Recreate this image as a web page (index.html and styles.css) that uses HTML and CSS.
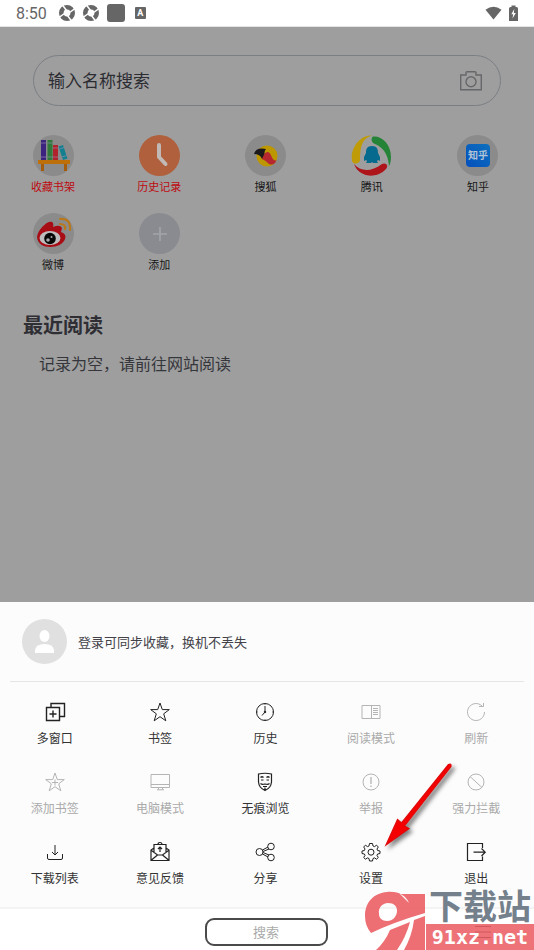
FILE: index.html
```html
<!DOCTYPE html>
<html lang="zh-CN">
<head>
    <meta charset="UTF-8">
    <meta name="viewport" content="width=device-width, initial-scale=1.0">
    <title>首页</title>
    <link rel="stylesheet" href="styles.css">
</head>
<body>

<div class="screen">
    <header class="status-bar">
        <span class="time">8:50</span>
        <div class="status-icons">
            <svg class="aperture" viewBox="0 0 16 16"><circle cx="8" cy="8" r="5.7" fill="none" stroke="#666" stroke-width="4.6"/><path d="M3.500 0 7.500 5.500M16 3.500 10.500 7.500M12.500 16 8.500 10.500M0 12.500 5.500 8.500" stroke="#fff" stroke-width="1.500"/></svg>
            <svg class="aperture" viewBox="0 0 16 16"><circle cx="8" cy="8" r="5.7" fill="none" stroke="#666" stroke-width="4.6"/><path d="M3.500 0 7.500 5.500M16 3.500 10.500 7.500M12.500 16 8.500 10.500M0 12.500 5.500 8.500" stroke="#fff" stroke-width="1.500"/></svg>
            <span class="status-square"></span>
            <span class="status-letter">A</span>
        </div>
        <div class="status-right">
            <svg class="wifi" viewBox="0 0 18 14"><path d="M.5 3.5Q9-3 17.500 3.500L9 14Z" fill="#666"/></svg>
            <svg class="battery" viewBox="0 0 9 16"><path d="M0 3.500Q0 2 1.500 2H2.500V.5H6.500V2H7.500Q9 2 9 3.500V16H0Z" fill="#666"/><path d="M5.300 4 2.300 9.200H4.200L3.500 13.500 6.800 8H4.800Z" fill="#fff"/></svg>
        </div>
    </header>

    <main class="home">
        <form class="search">
            <input class="search-input" type="text" placeholder="输入名称搜索" aria-label="输入名称搜索">
            <button class="camera" type="button" aria-label="拍照搜索">
                <svg viewBox="0 0 22 20"><path d="M.7 4H6V1.500Q6 .7 7 .7H15Q16 .7 16 1.500V4H21.300V18.700H.7Z" /><circle cx="11" cy="10.800" r="5"/></svg>
            </button>
        </form>

        <!-- 快捷方式 -->
        <nav class="shortcuts">
            <a class="shortcut red" href="#">
                <span class="circle">
                    <svg viewBox="0 0 41 41"><path fill="#3c2380" d="M8 5h5v20H8z"/><path fill="#2f7a3a" d="M14.500 5h5v20h-5z"/><path fill="#b0232c" d="M20 10h5v15h-5z"/><path fill="#14808f" d="m25.500 11.500 4.500-1.500 4.500 13.500-4.500 1.500z"/><path stroke="#9a92b4" stroke-width=".6" d="M8 8h5M8 22h5M14.500 8h5M14.500 22h5M20 13h5M20 22h5M26.500 14l4.500-1.500M29 22l4.500-1.500"/><path fill="#bd6f0a" d="M5 25h32v4H5z"/><path fill="#a75c0c" d="M8 29h3v7H8zM31 29h3v7h-3z"/></svg>
                </span>
                收藏书架
            </a>
            <a class="shortcut red" href="#">
                <span class="circle orange">
                    <svg viewBox="0 0 41 41"><path d="M20 10V22L26.500 29" fill="none" stroke="#c1b9b5" stroke-width="4" stroke-linecap="round" stroke-linejoin="round"/></svg>
                </span>
                历史记录
            </a>
            <a class="shortcut" href="#">
                <span class="circle">
                    <svg viewBox="0 0 41 41"><circle cx="22" cy="21" r="10.500" fill="#bd9700"/><path d="M9 19Q11 12 21 14Q18 17 21 23L17 24Q15 19 9 19Z" fill="#1b191c"/><path d="M17 24Q20 16 23 17C27 18 26 26 31.500 25.500Q29 31 24 29Q20 25 17 24Z" fill="#b5282f"/></svg>
                </span>
                搜狐
            </a>
            <a class="shortcut" href="#">
                <span class="circle plain">
                    <svg viewBox="0 0 41 41"><path d="M1 26C-1 13 9 0 21 .5C12 3 9 10 9 25C9 29 2 30 1 26Z" fill="#bf9b08"/><path d="M22 1.500C32 0 45 13 38 33C38 24 35 13 23 8.500C20 7 20 3 22 1.500Z" fill="#258337"/><path d="M3 29C9 36 19 38 31 29C35 27 38 31 35 34C26 44 8 43 3 29Z" fill="#ad151b"/><path d="M21 11C16 11 15 14 15 18L13 22V26L15 25L16 26L15 28H20L21 27L22 28H27L26 26L27 25L29 26V22L27 18C27 14 26 11 21 11Z" fill="#056a8d"/></svg>
                </span>
                腾讯
            </a>
            <a class="shortcut" href="#">
                <span class="circle"><span class="zhihu">知乎</span></span>
                知乎
            </a>
            <a class="shortcut" href="#">
                <span class="circle">
                    <svg viewBox="0 0 41 41"><path d="M4 24C5 16 15 7 19 9Q21 10 20 14Q27 11 29 15L28 19Q34 21 32 26C29 36 5 38 4 24Z" fill="#a80c15"/><ellipse cx="17" cy="25" rx="10.500" ry="7" fill="#bdbdbd"/><circle cx="17" cy="25.500" r="5.800" fill="#080808"/><circle cx="15" cy="27" r="1.800" fill="#aaa"/><circle cx="18.500" cy="24" r="1" fill="#aaa"/><path d="M27 6Q38 5 37 17M27 11Q33 11 32 16" fill="none" stroke="#b9791b" stroke-width="2.200" stroke-linecap="round"/></svg>
                </span>
                微博
            </a>
            <a class="shortcut" href="#">
                <span class="circle add">
                    <svg viewBox="0 0 41 41"><path d="M14 21H28M21 14V28" stroke="#a3a5a9" stroke-width="1.600"/></svg>
                </span>
                添加
            </a>
        </nav>

        <h1 class="recent-title">最近阅读</h1>
        <p class="recent-empty">记录为空，请前往网站阅读</p>
    </main>

    <!-- 底部弹出菜单 -->
    <section class="sheet">
        <a class="login" href="#">
            <svg class="avatar" viewBox="0 0 45 45"><circle cx="22.500" cy="22.500" r="22.500" fill="#e0e0e0"/><ellipse cx="22.500" cy="17" rx="5" ry="6" fill="#fff"/><path d="M13 34V31Q14 25 22.500 25T32 31V34Z" fill="#fff"/></svg>
            登录可同步收藏，换机不丢失
        </a>

        <div class="menu">
            <button class="item">
                <svg viewBox="0 0 22 22"><path stroke-width="1.400" d="M2.500 6.500H15.500V19.500H2.500ZM7 6V2.500H20.500V15.500H16M5.500 13H12.500M9 9.500V16.500"/></svg>
                多窗口
            </button>
            <button class="item">
                <svg viewBox="0 0 22 22"><path d="M11 2 13.300 8.600H20.300L14.700 12.800 16.800 19.800 11 15.700 5.200 19.800 7.300 12.800 1.700 8.600H8.700Z"/></svg>
                书签
            </button>
            <button class="item">
                <svg viewBox="0 0 22 22"><circle cx="11" cy="11" r="8.500"/><path d="M11 5V11L8 14.500"/><circle cx="11" cy="11" r=".8" fill="#222"/><path stroke-width=".6" d="M11 2.500V4M11 18V19.500M2.500 11H4M18 11H19.500"/></svg>
                历史
            </button>
            <button class="item" disabled>
                <svg viewBox="0 0 22 22"><path d="M2 4.500H20V17.500H2ZM11.500 4.500V17.500M13 7.500H18M13 9.500H18M13 11.500H18M13 13.500H18"/></svg>
                阅读模式
            </button>
            <button class="item" disabled>
                <svg viewBox="0 0 22 22"><path d="M17 5A8.500 8.500 0 1 0 19.500 11M14 5.500H18.500V2"/></svg>
                刷新
            </button>
            <button class="item" disabled>
                <svg viewBox="0 0 22 22"><path d="M11 2 13.300 8.600H20.300L14.700 12.800 16.800 19.800 11 15.700 5.200 19.800 7.300 12.800 1.700 8.600H8.700ZM8 11.500H14M11 8.500V14.500"/></svg>
                添加书签
            </button>
            <button class="item" disabled>
                <svg viewBox="0 0 22 22"><path d="M2 3.500H20.500V16.500H2ZM2 13.500H20.500M10 16.500 9 18.500M13 16.500 14 18.500M8 18.800H15"/></svg>
                电脑模式
            </button>
            <button class="item">
                <svg viewBox="0 0 22 22"><path stroke-width="1.200" d="M4.500 3Q11 1.500 17.500 3V11Q17 17 11 19.500Q5 17 4.500 11ZM6.500 6.500Q8 5 9.500 6.500M12.500 6.500Q14 5 15.500 6.500M7 9H9.500M12.500 9H15M6.500 12.500Q8 14 11 13Q14 14 15.500 12.500M9 15.500H13M11 16.500V19"/></svg>
                无痕浏览
            </button>
            <button class="item" disabled>
                <svg viewBox="0 0 22 22"><circle cx="11" cy="11" r="8"/><path stroke-width="1.300" d="M11 6V13M11 14.500V16"/></svg>
                举报
            </button>
            <button class="item" disabled>
                <svg viewBox="0 0 22 22"><circle cx="11" cy="11" r="8"/><path d="M5 5.500 17 16.500"/></svg>
                强力拦截
            </button>
            <button class="item">
                <svg viewBox="0 0 22 22"><path d="M11 4V14M8 11 11 14 14 11M3.500 13V17Q3.500 18.500 5 18.500H17Q18.500 18.500 18.500 17V13"/></svg>
                下载列表
            </button>
            <button class="item">
                <svg viewBox="0 0 22 22"><path stroke-width="1.200" d="M5 7 2 9V19.500H20V9L17 7M5 11.500V3.500H17V11.500M2.500 9.500 8.500 14H13.500L19.500 9.500M2.500 19 8.500 14M19.500 19 13.500 14M11 11V6M9 8 11 6 13 8M9 3.500Q9 1.500 11 1.500T13 3.500"/></svg>
                意见反馈
            </button>
            <button class="item">
                <svg viewBox="0 0 22 22"><circle cx="5.500" cy="11" r="3.500"/><circle cx="17" cy="5.500" r="3.300"/><circle cx="17" cy="16.500" r="3.300"/><path d="M8.500 9 14 6M9 10.500 15 8M9 11.500 15 14M8.500 13 14 16"/></svg>
                分享
            </button>
            <button class="item">
                <svg viewBox="0 0 22 22"><path d="M9.500 2.500H12.500L13 5L14.500 5.600L16.600 4.200L18.300 6L17 8L17.600 9.500L20 10V12.500L17.600 13L17 14.500L18.300 16.500L16.600 18.200L14.500 16.900L13 17.500L12.500 20H9.500L9 17.500L7.500 16.900L5.400 18.200L3.700 16.500L5 14.500L4.400 13L2 12.500V10L4.400 9.500L5 8L3.700 6L5.400 4.200L7.500 5.600L9 5Z"/><circle cx="11" cy="11.200" r="3"/></svg>
                设置
            </button>
            <button class="item">
                <svg viewBox="0 0 22 22"><path stroke-width="1.200" d="M17.500 7V2.500H2.500V19.500H17.500V15.500M8.500 11.200H20M16.500 7.500 20.200 11.200 16.500 15"/></svg>
                退出
            </button>
        </div>

        <svg class="arrow" viewBox="0 0 80 95"><path d="M68.500 9.500 21.500 68 17.500 64.500 6 90 29 73.500 24.500 71 71 11.500Q71.500 8 68.500 9.500Z" fill="#f50000" stroke="#e00808" stroke-width="1.200"/></svg>
    </section>

    <footer class="bottom-bar">
        <button class="bottom-search">搜索</button>
        <button class="bottom-menu" aria-label="菜单">
            <svg viewBox="0 0 16 14"><path d="M0 1.500H16M0 7H16M0 12.500H16" stroke="#444" stroke-width="1.200"/></svg>
        </button>
    </footer>

    <div class="watermark">
        <svg class="watermark-logo" viewBox="0 0 62 60">
            <path fill-rule="evenodd" d="M23 2C35 1 42 6 45 13L36 4L61 4V23Q30 32 7 43Q1 36 1 26C1 12 10 3 23 2ZM24 13C18 13 14 18 15 24C15 28 18 31 23 31C29 31 33 26 33 21C33 16 30 13 24 13Z"/>
            <path d="M26 40 46 32Q42 47 33 60H12Q21 52 26 40ZM50 30 61 26V60H40Q48 46 50 30Z"/>
        </svg>
        <div class="watermark-text">
            <span class="watermark-name">下载站</span>
            <span class="watermark-url">91xz.net</span>
        </div>
    </div>
</div>

</body>
</html>
```

FILE: styles.css
```css
* {
    box-sizing: border-box;
}
body {
    margin: 0;
    font-family: Roboto, "Noto Sans CJK SC", sans-serif;
    background-color: #9e9e9e;
}
a {
    color: inherit;
    text-decoration: none;
}
button {
    padding: 0;
    border: none;
    background: none;
    font-family: inherit;
    cursor: pointer;
}
svg {
    display: block;
}
.screen {
    position: relative;
    display: flex;
    flex-direction: column;
    min-height: 100vh;
}

/* 状态栏 */
.status-bar {
    display: flex;
    align-items: center;
    height: 27px;
    padding: 0 16px;
    background-color: #fff;
    border-bottom: 1px solid #e4e4e4;
}
.time {
    font-size: 16px;
    color: #666;
}
.status-icons {
    display: flex;
    align-items: center;
    gap: 8px;
    margin-left: 12px;
}
.aperture {
    width: 16px;
    height: 16px;
}
.status-square {
    width: 18px;
    height: 18px;
    border-radius: 3px;
    background-color: #666;
}
.status-letter {
    width: 11px;
    margin-left: 2px;
    border-radius: 1px;
    background-color: #666;
    color: #fff;
    font-size: 9px;
    font-weight: bold;
    line-height: 12px;
    text-align: center;
}
.status-right {
    display: flex;
    align-items: center;
    gap: 7px;
    margin-left: auto;
}
.wifi {
    width: 17px;
    height: 14px;
}
.battery {
    width: 9px;
    height: 16px;
}

/* 首页 */
.home {
    flex: 1;
}
.search {
    display: flex;
    align-items: center;
    height: 51px;
    margin: 28px 33px 0;
    padding: 0 18px 0 14px;
    border: 1px solid #7b7f84;
    border-radius: 26px;
}
.search-input {
    flex: 1;
    min-width: 0;
    padding: 0;
    border: none;
    outline: none;
    background: none;
    font-family: inherit;
    font-size: 17px;
    color: #2c2d32;
}
.search-input::placeholder {
    color: #2c2d32;
    opacity: 1;
}
.camera svg {
    width: 22px;
    height: 20px;
    fill: none;
    stroke: #65676a;
    stroke-width: 1.4;
}
.shortcuts {
    display: grid;
    grid-template-columns: repeat(5, 1fr);
    row-gap: 17px;
    margin-top: 29px;
    padding-right: 3px;
}
.shortcut {
    display: flex;
    flex-direction: column;
    align-items: center;
    gap: 4px;
    font-size: 11px;
    line-height: 16px;
    color: #161616;
}
.shortcut.red {
    color: #bd0a10;
}
.circle {
    display: flex;
    align-items: center;
    justify-content: center;
    width: 41px;
    height: 41px;
    border-radius: 50%;
    background-color: #8b8b8b;
    overflow: hidden;
}
.circle svg {
    width: 100%;
    height: 100%;
}
.circle.orange {
    background-color: #b0603c;
}
.circle.plain {
    background-color: #9e9e9e;
}
.circle.add {
    background-color: #898b90;
}
.zhihu {
    width: 24px;
    border-radius: 4px;
    background: linear-gradient(to top right, #0450bd, #0d70bd);
    color: #b5c4d8;
    font-size: 10px;
    font-weight: bold;
    line-height: 23px;
    text-align: center;
}
.recent-title {
    margin: 38px 23px 0;
    font-size: 20px;
    font-weight: bold;
    line-height: 28px;
    color: #2e2e34;
}
.recent-empty {
    margin: 13px 39px 0;
    font-size: 16px;
    line-height: 24px;
    color: #35363b;
}

/* 底部弹出菜单 */
.sheet {
    position: relative;
    background-color: #fcfcfc;
}
.login {
    display: flex;
    align-items: center;
    gap: 11px;
    margin: 0 10px;
    padding: 17px 12px;
    border-bottom: 1px solid #e6e6e6;
    font-size: 13px;
    color: #424248;
}
.avatar {
    width: 45px;
    height: 45px;
}
.menu {
    display: grid;
    grid-template-columns: repeat(5, 1fr);
    row-gap: 24px;
    padding: 19px 5px 20px 2px;
}
.item {
    display: flex;
    flex-direction: column;
    align-items: center;
    gap: 8px;
    font-size: 12px;
    line-height: 16px;
    color: #333;
}
.item svg {
    width: 22px;
    height: 22px;
    fill: none;
    stroke: #222;
    stroke-width: 1;
}
.item:disabled {
    color: #aaa;
    cursor: default;
}
.item:disabled svg {
    stroke: #b4b4b4;
}
.arrow {
    position: absolute;
    top: 153px;
    right: 74px;
    width: 80px;
    height: 95px;
    pointer-events: none;
    filter: drop-shadow(3px 3px 2px rgba(0, 0, 0, 0.5));
}

/* 底部栏 */
.bottom-bar {
    display: grid;
    grid-template-columns: 1fr 123px 1fr;
    align-items: center;
    height: 43px;
    padding: 4px 2px 0 0;
    border-top: 2px solid #f3f3f3;
    background-color: #fff;
}
.bottom-search {
    grid-column: 2;
    height: 28px;
    border: 2px solid #4a4a4a;
    border-radius: 9px;
    font-size: 13px;
    color: #aaa;
}
.bottom-menu {
    justify-self: end;
    margin-right: 41px;
}
.bottom-menu svg {
    width: 16px;
    height: 14px;
}
.watermark {
    position: absolute;
    right: 0;
    bottom: 0;
    display: flex;
    pointer-events: none;
}
.watermark-logo {
    width: 62px;
    height: 60px;
    fill: #ea5a60;
    fill-opacity: 0.88;
}
.watermark-text {
    display: flex;
    flex-direction: column;
    justify-content: flex-end;
    width: 108px;
}
.watermark-name {
    padding-left: 3px;
    font-size: 34px;
    font-weight: bold;
    line-height: 34px;
    color: #74808b;
    white-space: nowrap;
}
.watermark-url {
    background-color: rgba(234, 90, 96, 0.85);
    font-family: "DejaVu Sans Mono", monospace;
    font-size: 20px;
    font-weight: bold;
    line-height: 26px;
    text-align: center;
    color: #fff;
}
```
